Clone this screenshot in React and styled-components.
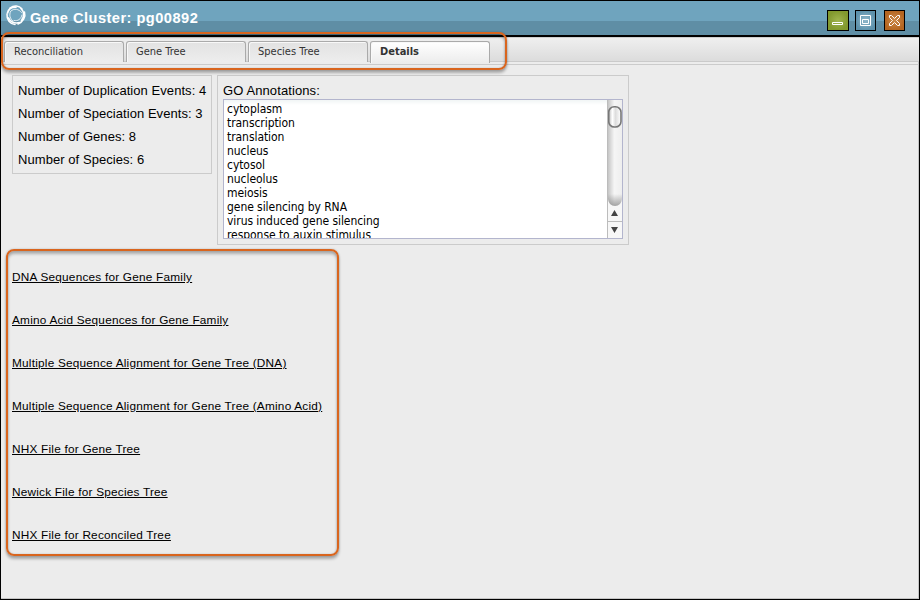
import React from "react";
import styled, { createGlobalStyle } from "styled-components";

const Global = createGlobalStyle`
  * { box-sizing: border-box; }
  body { margin: 0; background: #ececec; overflow: hidden; }
`;

const Window = styled.div`
  position: relative;
  width: 920px;
  height: 600px;
  border: 1px solid #000;
  background: #ececec;
  color: #000;
  font: 13px/23px "Liberation Sans", Arial, sans-serif;
  box-shadow: inset -1px -1px #c4c4c4;
`;

const TitleBar = styled.header`
  display: flex;
  align-items: flex-start;
  height: 36px;
  padding: 3px 14px 0 4px;
  border-bottom: 2px solid #000;
  background: linear-gradient(#6fa4be 20px, #5f8ea5 20px);
`;

const Title = styled.h1`
  margin: 3px auto 0 3px;
  color: #fff;
  font: bold 14.6px/22px "Liberation Sans", Arial, sans-serif;
  letter-spacing: 0.48px;
`;

const WindowButton = styled.button`
  width: ${(p) => p.$width || 21}px;
  height: 21px;
  margin: 6px 0 0 ${(p) => p.$gap || 0}px;
  padding: 0;
  border: 1px solid #000;
  background: ${(p) => p.$fill};
  svg { display: block; }
`;

const TabBar = styled.nav`
  display: flex;
  gap: 2px;
  height: 25px;
  padding: 3px 3px 0;
  border-top: 1px solid #cfcfcf;
  border-bottom: 1px solid #cacaca;
  background: linear-gradient(#efefef, #dcdcdc);
`;

const Tab = styled.button`
  width: 120px;
  height: ${(p) => (p.$active ? 22 : 21)}px;
  padding: 0 0 ${(p) => (p.$active ? 2 : 0)}px 9px;
  border: 1px solid #aaa;
  border-bottom: 0;
  border-radius: 3px 3px 0 0;
  background: ${(p) => (p.$active ? "linear-gradient(#fff, #ececec)" : "linear-gradient(#e2e2e2, #ededed)")};
  box-shadow: inset 1px 1px #f8f8f8;
  color: #333;
  text-align: left;
  font: ${(p) => (p.$active ? "bold" : "normal")} 11px/20px "DejaVu Sans Condensed", "DejaVu Sans", sans-serif;
  font-stretch: condensed;
`;

const TabRule = styled.div`
  height: 3px;
  border-bottom: 1px solid #cbcbcb;
`;

const Summary = styled.section`
  display: flex;
  align-items: flex-start;
  gap: 5px;
  padding: 10px 0 0 11px;
`;

const Stats = styled.div`
  width: 200px;
  height: 99px;
  padding: 3px 5px;
  border: 1px solid #cbcbcb;
  white-space: nowrap;
  letter-spacing: 0.06px;
`;

const Stat = styled.div`
  height: 23px;
`;

const Annotations = styled.div`
  width: 412px;
  height: 170px;
  padding: 3px 5px;
  border: 1px solid #cbcbcb;
`;

const Caption = styled.div`
  height: 20px;
  line-height: 23px;
  letter-spacing: 0.1px;
`;

const ListBox = styled.div`
  display: flex;
  width: 400px;
  height: 140px;
  border: 1px solid #b3b5cd;
  background: linear-gradient(#f1f5f5, #fff 5px);
`;

const Terms = styled.ul`
  flex: 1;
  margin: 0;
  padding: 2px 3px;
  overflow: hidden;
  list-style: none;
  font: 12px/14px "DejaVu Sans Condensed", "DejaVu Sans", sans-serif;
  font-stretch: condensed;
  letter-spacing: -0.06px;
`;

const Term = styled.li`
  height: 14px;
  white-space: nowrap;
`;

const LinkList = styled.ul`
  display: grid;
  grid-auto-rows: 43px;
  margin: 20px 0 0;
  padding: 0 0 0 11px;
  list-style: none;
`;

const FileLink = styled.a`
  color: #000;
  font-size: 11.8px;
  letter-spacing: 0.22px;
  text-decoration: underline;
`;

const Highlight = styled.div`
  position: absolute;
  left: ${(p) => p.$left}px;
  top: ${(p) => p.$top}px;
  width: ${(p) => p.$width}px;
  height: ${(p) => p.$height}px;
  border: 2px solid #d9651e;
  border-radius: 8px;
  box-shadow: 0 3px 3px rgba(0, 0, 0, 0.28), inset 0 3px 3px rgba(0, 0, 0, 0.26),
    0 0 2px rgba(0, 0, 0, 0.25), inset 0 0 2px rgba(0, 0, 0, 0.2);
  pointer-events: none;
`;

const Logo = () => (
  <svg width="22" height="22" viewBox="0 0 22 22" fill="none" stroke="#fff" strokeLinecap="round">
    <path strokeWidth="1.5" d="M5 4C9 1 14 1.5 17 5M19.500 8C21 13 18 18 13 20M10 20.5C5 20 1.5 16 2 10" />
    <path strokeWidth="1.7" d="M2.5 9C3.500 5 7 3 11 3.2M16 4.500C19.500 8 19.500 13 16.500 16.500M14.500 18.500C10 20 5 18 3.500 14" />
    <path strokeWidth="1" d="M6 7C9 4 14 5 16.500 8.500M17 11C16 15 13 17.5 9 16.500M8 17C5 15 4 11 5.5 7.5" opacity=".8" />
  </svg>
);

const ScrollBar = () => (
  <svg width="15" height="138" viewBox="0 0 15 138">
    <defs>
      <linearGradient id="track">
        <stop offset="0" stopColor="#c5c5c5" />
        <stop offset=".45" stopColor="#f5f5f5" />
        <stop offset="1" stopColor="#eee" />
      </linearGradient>
      <linearGradient id="thumb">
        <stop offset="0" stopColor="#bbb" />
        <stop offset=".3" stopColor="#fff" />
        <stop offset=".55" stopColor="#ddd" />
        <stop offset="1" stopColor="#fff" />
      </linearGradient>
      <linearGradient id="trackEnd" x2="0" y2="1">
        <stop offset="0" stopColor="#888" stopOpacity="0" />
        <stop offset="1" stopColor="#888" stopOpacity=".75" />
      </linearGradient>
    </defs>
    <rect width="15" height="138" fill="#f7f7f7" />
    <path d="M1 0H15V99Q14 106 8 106Q2 106 1 99Z" fill="url(#track)" />
    <path d="M1 94H15V99Q14 106 8 106Q2 106 1 99Z" fill="url(#trackEnd)" />
    <rect x="1.7" y="6.7" width="12.3" height="20.3" rx="5.5" fill="url(#thumb)" stroke="#777" strokeWidth="1.6" />
    <path d="M.5 0V138M1 121.5H15" stroke="#bcbcbc" />
    <path d="M4 116L7.5 110L11 116ZM4 127L7.5 133L11 127Z" fill="#444" />
  </svg>
);

const tabs = ["Reconciliation", "Gene Tree", "Species Tree", "Details"];
const stats = ["Number of Duplication Events: 4", "Number of Speciation Events: 3", "Number of Genes: 8", "Number of Species: 6"];
const terms = ["cytoplasm", "transcription", "translation", "nucleus", "cytosol", "nucleolus", "meiosis", "gene silencing by RNA", "virus induced gene silencing", "response to auxin stimulus"];
const links = [
  "DNA Sequences for Gene Family",
  "Amino Acid Sequences for Gene Family",
  "Multiple Sequence Alignment for Gene Tree (DNA)",
  "Multiple Sequence Alignment for Gene Tree (Amino Acid)",
  "NHX File for Gene Tree",
  "Newick File for Species Tree",
  "NHX File for Reconciled Tree",
];

export default function App() {
  return (
    <Window>
      <Global />
      <TitleBar>
        <Logo />
        <Title>Gene Cluster: pg00892</Title>
        <WindowButton $width={22} $fill="radial-gradient(#a1b54f, #82992e 70%)" aria-label="Minimize">
          <svg width="20" height="19" fill="none" stroke="#fff"><path d="M4.5 11.5h10v2h-10z" /></svg>
        </WindowButton>
        <WindowButton $gap={6} $fill="radial-gradient(#91b8cb, #5d91ab 75%)" aria-label="Maximize">
          <svg width="19" height="19" fill="none" stroke="#fff"><path d="M4.5 4.5h10v10h-10zM6.5 8.5h6v4h-6z" /></svg>
        </WindowButton>
        <WindowButton $gap={8} $fill="radial-gradient(#cc8a4b, #b46520 75%)" aria-label="Close">
          <svg width="19" height="19" fill="none" stroke="#fff"><path d="M4.5 4.5h2l3 3 3-3h2v2l-3 3 3 3v2h-2l-3-3-3 3h-2v-2l3-3-3-3z" /></svg>
        </WindowButton>
      </TitleBar>
      <TabBar>
        {tabs.map((name) => (
          <Tab key={name} $active={name === "Details"}>{name}</Tab>
        ))}
      </TabBar>
      <TabRule />
      <Summary>
        <Stats>{stats.map((s) => <Stat key={s}>{s}</Stat>)}</Stats>
        <Annotations>
          <Caption>GO Annotations:</Caption>
          <ListBox>
            <Terms>{terms.map((t) => <Term key={t}>{t}</Term>)}</Terms>
            <ScrollBar />
          </ListBox>
        </Annotations>
      </Summary>
      <LinkList>
        {links.map((l) => <li key={l}><FileLink>{l}</FileLink></li>)}
      </LinkList>
      <Highlight $left={0} $top={31} $width={506} $height={38} />
      <Highlight $left={5} $top={248} $width={333} $height={307} />
    </Window>
  );
}
